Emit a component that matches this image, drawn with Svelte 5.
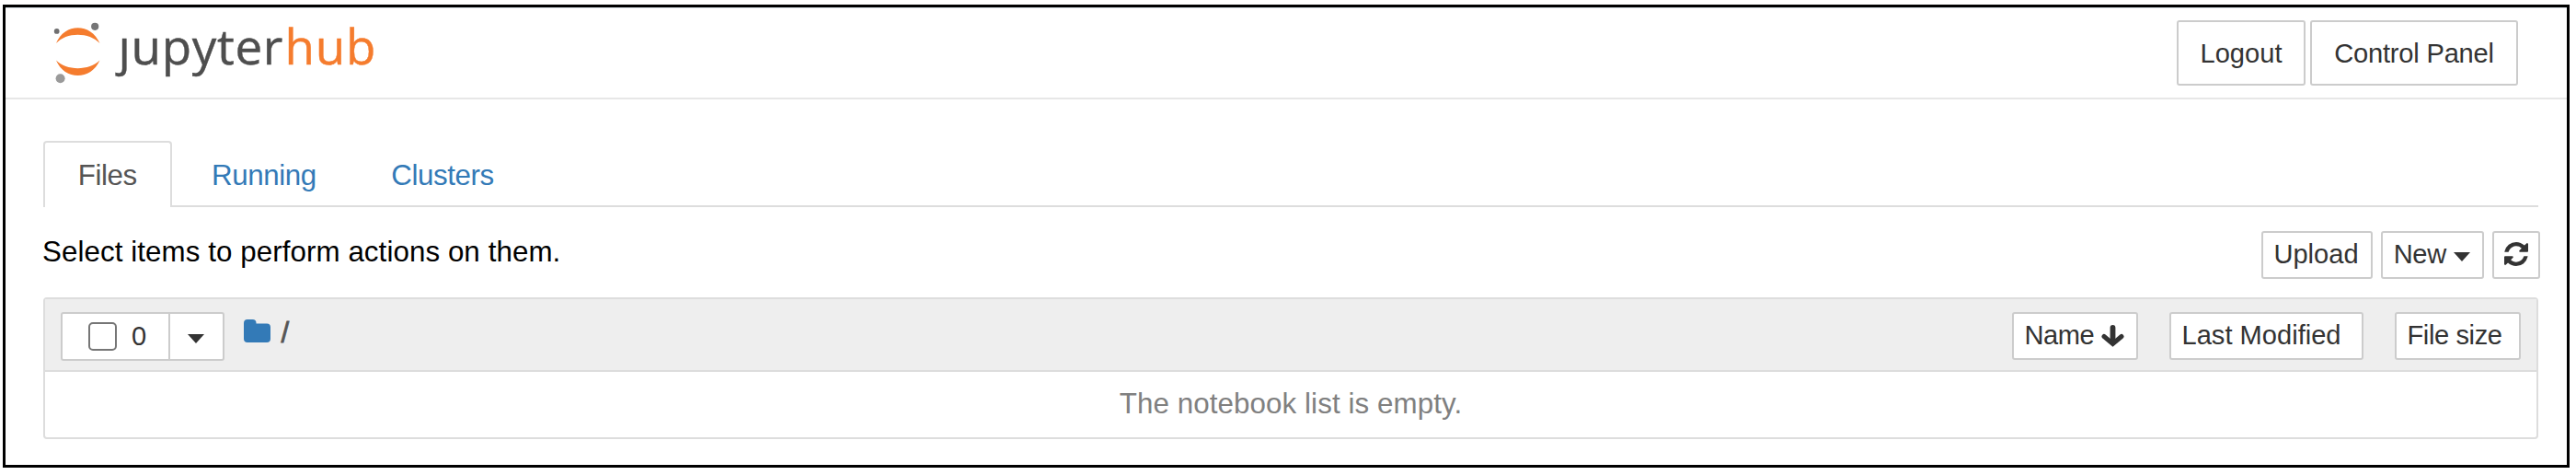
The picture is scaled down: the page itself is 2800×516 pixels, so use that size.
<script>
  const tabs = [
    { label: 'Files', active: true, width: 139.5, shift: 0 },
    { label: 'Running', width: 191, shift: 10 },
    { label: 'Clusters', width: 191, shift: 16 }
  ];
</script>

<div class="frame">
  <header>
    <svg class="logo" viewBox="0 0 360 80" width="360" height="80" role="img" aria-label="jupyterhub">
      <clipPath id="stem"><rect x="50" y="23" width="60" height="60" /></clipPath>
      <path fill="#f57c2e" d="M6 29 C15 6.500 44 6.500 53.500 29 C42 16.500 17 16.500 6 29Z" />
      <path fill="#f57c2e" d="M6 47.500 C15 69.500 44 69.500 53.500 47.500 C42 59 17 59 6 47.500Z" />
      <circle cx="6.700" cy="15.900" r="2.900" fill="#6f6f70" />
      <circle cx="48.200" cy="10.800" r="4.100" fill="#767677" />
      <circle cx="10.600" cy="67.300" r="5" fill="#9a9a9a" />
      <g class="word">
        <text x="73.500" y="52" clip-path="url(#stem)">j</text>
        <text x="87.500" y="52" textLength="165" lengthAdjust="spacing">upyter</text>
        <text x="254.500" y="52" textLength="99" lengthAdjust="spacing" class="hub">hub</text>
      </g>
    </svg>
    <nav>
      <button class="logout">Logout</button>
      <button class="control">Control Panel</button>
    </nav>
  </header>
  <main>
    <div class="tabs">
      {#each tabs as tab}
        <a class:active={tab.active} style="width:{tab.width}px;padding-left:{tab.shift}px">{tab.label}</a>
      {/each}
    </div>
    <div class="toolbar">
      <p>Select items to perform actions on them.</p>
      <div class="actions">
        <button class="upload">Upload</button>
        <button class="new">New<i class="caret"></i></button>
        <button class="refresh" aria-label="Refresh">
          <svg viewBox="0 0 1536 1536" width="26" height="26" fill="#333"><path d="M1511 928q0 5-1 7-64 268-268 434.500T764 1536q-146 0-282.500-55T238 1324l-129 129q-19 19-45 19t-45-19-19-45V960q0-26 19-45t45-19h448q26 0 45 19t19 45-19 45l-137 137q71 66 161 102t187 36q134 0 250-65t186-179q11-17 53-117 8-23 30-23h192q13 0 22.500 9.500t9.500 22.500zM1536 128v448q0 26-19 45t-45 19h-448q-26 0-45-19t-19-45 19-45l138-138Q969 256 768 256q-134 0-250 65T332 500q-11 17-53 117-8 23-30 23H50q-13 0-22.500-9.500T18 608v-7q65-268 270-434.500T768 0q146 0 284 55.500T1297 212l130-129q19-19 45-19t45 19 19 45z" /></svg>
        </button>
      </div>
    </div>
    <section>
      <div class="list-head">
        <div class="select">
          <label><span class="check"></span><span>0</span></label>
          <span class="drop"><i class="caret"></i></span>
        </div>
        <div class="crumbs">
          <svg viewBox="0 0 29 25" width="29" height="25" fill="#337ab7"><path d="M4 0h5.500a4 4 0 0 1 4 4v.500H25a4 4 0 0 1 4 4V21a4 4 0 0 1-4 4H4a4 4 0 0 1-4-4V4a4 4 0 0 1 4-4Z" /></svg>
          <span>/</span>
        </div>
        <div class="sorts">
          <button class="name">Name<svg viewBox="0 0 25 24" width="25" height="24" fill="none" stroke="#333"><path stroke-width="5.800" stroke-linecap="round" d="M12.500 3v15" /><path stroke-width="5" stroke-linecap="round" d="M3 12.500l9.500 8 9.500-8" /></svg></button>
          <button class="modified">Last Modified</button>
          <button class="size">File size</button>
        </div>
      </div>
      <div class="empty">The notebook list is empty.</div>
    </section>
  </main>
</div>

<style>
  :global(body) { background: #fff; }
  .frame, .frame * { box-sizing: border-box; }
  .frame {
    width: 2790px; height: 503px; margin: 5px 0 0 3px;
    border: 3px solid #000; box-shadow: 0 1px 0 #bbb;
    background: #fff; color: #000;
    font: 31.3px/44px "Liberation Sans", Arial, sans-serif;
  }
  header {
    height: 100px; padding: 13px 53px 0 48px;
    display: flex; justify-content: space-between; align-items: flex-start;
    border-top: 1px solid #d6dde3; border-bottom: 2px solid #e7e7e7;
  }
  .logo { display: block; margin: -4px 0 0 1px; flex: none; overflow: visible; }
  .word { font: 53px "Open Sans", "Noto Sans", sans-serif; fill: #4e4e4e; stroke: #4e4e4e; stroke-width: .4px; }
  .word .hub { fill: #f57c2e; stroke: #f57c2e; }
  nav { display: flex; gap: 5px; }
  button {
    display: flex; align-items: center; height: 52px; padding: 0 0 2px;
    border: 2px solid #ccc; border-radius: 3px; background: #fff; color: #333;
    font: 29.1px/44px "Liberation Sans", Arial, sans-serif; white-space: nowrap;
  }
  nav button { height: 71px; padding: 0; justify-content: center; }
  .logout { width: 140px; }
  .control { width: 226px; letter-spacing: -.2px; }
  main { padding: 45px 31px 0 41px; }
  .tabs { display: flex; height: 72px; border-bottom: 2px solid #ddd; }
  .tabs a {
    height: 72px; line-height: 71px; text-align: center; color: #337ab7;
    border: 2px solid transparent; border-bottom: 0; letter-spacing: -.4px;
  }
  .tabs a.active {
    color: #555; background: #fff; border-color: #ddd; border-radius: 4px 4px 0 0;
  }
  .toolbar { display: flex; justify-content: space-between; height: 98px; padding-top: 26px; }
  p { margin: 1px 0 0 -1px; line-height: 44px; letter-spacing: .08px; }
  .actions { display: flex; gap: 9.500px; margin-right: -2px; }
  .actions button { justify-content: center; padding-right: 1px; }
  .upload { width: 121px; }
  .new { width: 111.500px; letter-spacing: -.4px; }
  .refresh { width: 52px; }
  .caret { border: solid transparent; border-width: 10px 9.500px 0; border-top-color: #333; }
  .new .caret { margin: 6px 0 0 8px; }
  section { height: 154px; border: 2px solid #ddd; border-radius: 4px; }
  .list-head {
    display: flex; height: 79px; padding: 14px 17px 0; background: #eee;
    border-bottom: 2px solid #ddd;
  }
  .select {
    display: flex; width: 178px; height: 53px; border: 2px solid #ccc; border-radius: 3px;
    background: #fff; color: #333; font-size: 29.1px;
  }
  label { display: flex; width: 114.500px; padding-left: 28px; line-height: 48px; }
  .check { width: 31px; height: 31px; margin: 9px 16px 0 0; border: 2px solid #767676; border-radius: 5px; }
  .drop { flex: 1; border-left: 2px solid #ccc; padding: 22px 0 0 19px; line-height: 0; }
  .drop .caret { display: block; width: 0; }
  .crumbs { display: flex; padding: 8px 0 0 20.500px; color: #555; }
  .crumbs span { margin: -7px 0 0 12px; line-height: 44px; -webkit-text-stroke: .8px #555; }
  .sorts { display: flex; margin-left: auto; gap: 33.500px; }
  .sorts button { padding-left: 12px; }
  .name { width: 137.500px; letter-spacing: -.5px; }
  .name svg { margin: 1px 0 0 8px; }
  .modified { width: 211.500px; }
  .size { width: 137.500px; letter-spacing: -.4px; }
  .empty { color: #808080; text-align: center; line-height: 69px; letter-spacing: .1px; }
</style>
